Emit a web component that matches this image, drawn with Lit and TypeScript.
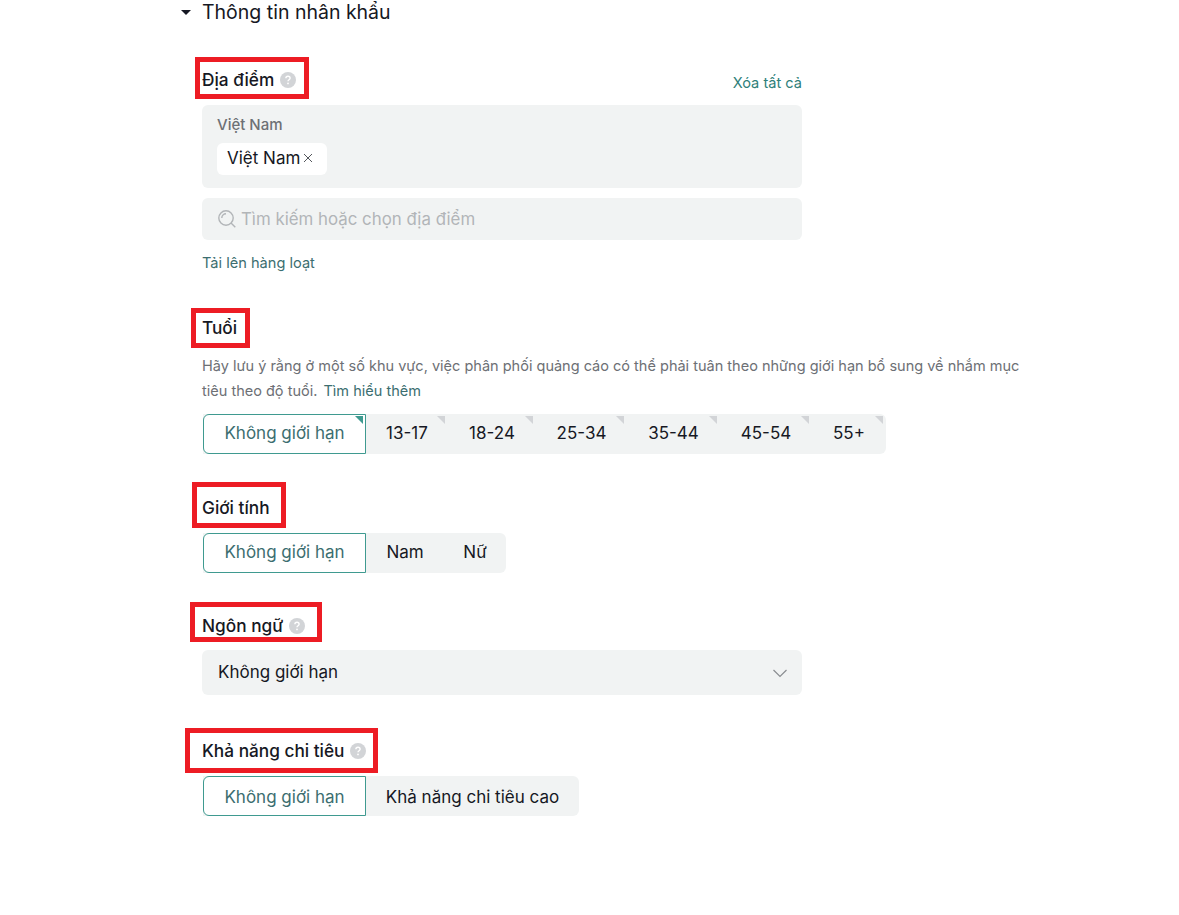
import { LitElement, html, css, svg } from "lit";
import { customElement } from "lit/decorators.js";

const help = html`<svg class="help" viewBox="0 0 16 16" width="16" height="16"><circle cx="8" cy="8" r="8" fill="#d2d4d7"/><path d="M5.9 6.3c0-1.2.9-2 2.1-2s2.1.8 2.1 1.9c0 1.6-2.1 1.6-2.1 3.1" fill="none" stroke="#fff" stroke-width="1.4"/><circle cx="8" cy="11.4" r=".9" fill="#fff"/></svg>`;

const corner = svg`<path d="M0 0h8v8z"/>`;

@customElement("app-root")
export class AppRoot extends LitElement {
  static styles = css`
    :host { display: block; height: 915px; overflow: hidden; background: #fff; font-family: Inter, "Noto Sans", sans-serif; color: #161823; }
    .page { padding-left: 202px; width: 830px; }
    .title { position: relative; font-size: 19.5px; line-height: 24px; height: 24px; color: #161823; }
    .caret { position: absolute; left: -21px; top: 10px; width: 0; height: 0; border-left: 5.5px solid transparent; border-right: 5.5px solid transparent; border-top: 5px solid #161823; }
    .label-row { display: flex; justify-content: space-between; align-items: flex-end; width: 600px; }
    .label { position: relative; display: inline-flex; align-items: center; gap: 6px; font-size: 17.25px; font-weight: 500; line-height: 26px; }
    .mark { position: absolute; box-sizing: border-box; border: 5px solid #ed1c24; pointer-events: none; }
    .m-loc { left: -7px; top: -10px; width: 114px; height: 42px; }
    .m-age { left: -11px; top: -7px; width: 59px; height: 40px; }
    .m-gender { left: -10px; top: -13px; width: 94px; height: 46px; }
    .m-lang { left: -12px; top: -11px; width: 132px; height: 40px; }
    .m-spend { left: -17px; top: -10px; width: 193px; height: 45px; }
    .help { display: block; flex: none; }
    .clear { font-size: 14.6px; line-height: 20px; color: #2f7f7a; }
    .loc { margin-top: 12px; width: 600px; height: 83px; box-sizing: border-box; background: #f1f3f3; border-radius: 6px; padding: 10px 15px; }
    .loc-name { font-size: 15px; font-weight: 500; line-height: 20px; color: #6d7075; }
    .tag { display: inline-flex; align-items: center; gap: 3px; margin-top: 8px; height: 32px; width: 110px; box-sizing: border-box; padding: 0 0 2px 10px; background: #fff; border-radius: 6px; font-size: 17px; }
    .tag svg { display: block; }
    .search { margin-top: 10px; width: 600px; height: 42px; box-sizing: border-box; background: #f1f3f3; border-radius: 6px; padding-left: 16px; display: flex; align-items: center; gap: 5px; font-size: 16.85px; color: #b2b5b8; }
    .upload { margin-top: 12px; font-size: 14.6px; line-height: 22px; color: #3c6e70; }
    .hint { margin-top: 13px; font-size: 14.52px; line-height: 25px; color: #6d7075; width: 830px; }
    .hint a { color: #3c6e70; margin-left: 2px; }
    .seg { display: inline-flex; margin-left: 1px; height: 40px; background: #f1f3f3; border-radius: 0 6px 6px 0; font-size: 17px; vertical-align: top; }
    .opt { position: relative; display: flex; align-items: center; justify-content: center; box-sizing: border-box; }
    .opt.sel { width: 163px; background: #fff; border: 1px solid #3f9a90; border-radius: 6px 0 0 6px; color: #3c6e70; }
    .corner { position: absolute; top: 2px; right: 3px; width: 8px; height: 8px; fill: #d2d4d7; }
    .sel .corner { top: 1px; right: 2px; fill: #3f9a90; }
    .select { margin-top: 11px; width: 600px; height: 45px; box-sizing: border-box; background: #f1f3f3; border-radius: 6px; padding: 0 14px 2px 16px; display: flex; align-items: center; justify-content: space-between; font-size: 17px; }
    .select svg { margin-top: 2px; }
    .s-loc { margin-top: 43px; }
    .s-age { margin-top: 41px; }
    .s-gender { margin-top: 41px; }
    .s-lang { margin-top: 40px; }
    .s-spend { margin-top: 43px; }
    .seg-gender, .seg-spend { margin-top: 12px; }
    .seg-age { margin-top: 10px; }
    .seg-age .opt, .seg-gender .opt { padding-bottom: 2px; }
    .seg-spend .opt { padding-top: 2px; }
  `;

  private seg(items: [string, number][], corners: boolean, cls: string) {
    return html`<div class=${cls}><div class="seg">
      <div class="opt sel">Không giới hạn${corners ? html`<svg class="corner" viewBox="0 0 8 8">${corner}</svg>` : ""}</div>
      ${items.map(([t, w]) => html`<div class="opt" style="width:${w}px">${t}${corners ? html`<svg class="corner" viewBox="0 0 8 8">${corner}</svg>` : ""}</div>`)}
    </div></div>`;
  }

  render() {
    return html`<div class="page">
      <div class="title"><span class="caret"></span>Thông tin nhân khẩu</div>
      <div class="s-loc label-row">
        <div class="label">Địa điểm ${help}<span class="mark m-loc"></span></div>
        <div class="clear">Xóa tất cả</div>
      </div>
      <div class="loc">
        <div class="loc-name">Việt Nam</div>
        <div class="tag">Việt Nam<svg width="10" height="10" viewBox="0 0 10 10"><path d="M1 1l8 8M9 1l-8 8" stroke="#54575c" stroke-width="1" fill="none"/></svg></div>
      </div>
      <div class="search"><svg width="18" height="18" viewBox="0 0 18 18" fill="none" stroke="#b2b5b8" stroke-width="1.4"><circle cx="8" cy="8" r="7.2"/><path d="M13 13l4.3 4.3M3.8 8a4.2 4.2 0 0 1 4.2-4.2"/></svg>Tìm kiếm hoặc chọn địa điểm</div>
      <div class="upload">Tải lên hàng loạt</div>
      <div class="s-age"><div class="label">Tuổi<span class="mark m-age"></span></div></div>
      <div class="hint">Hãy lưu ý rằng ở một số khu vực, việc phân phối quảng cáo có thể phải tuân theo những giới hạn bổ sung về nhắm mục tiêu theo độ tuổi. <a>Tìm hiểu thêm</a></div>
      ${this.seg([["13-17", 82], ["18-24", 88], ["25-34", 91], ["35-44", 93], ["45-54", 92], ["55+", 74]], true, "seg-age")}
      <div class="s-gender"><div class="label">Giới tính<span class="mark m-gender"></span></div></div>
      ${this.seg([["Nam", 78], ["Nữ", 62]], false, "seg-gender")}
      <div class="s-lang"><div class="label">Ngôn ngữ ${help}<span class="mark m-lang"></span></div></div>
      <div class="select">Không giới hạn<svg width="16" height="16" viewBox="0 0 16 16" fill="none" stroke="#8a8d91" stroke-width="1.2"><path d="M1.5 5l6.5 6.5L14.5 5"/></svg></div>
      <div class="s-spend"><div class="label">Khả năng chi tiêu ${help}<span class="mark m-spend"></span></div></div>
      ${this.seg([["Khả năng chi tiêu cao", 213]], false, "seg-spend")}
    </div>`;
  }
}
